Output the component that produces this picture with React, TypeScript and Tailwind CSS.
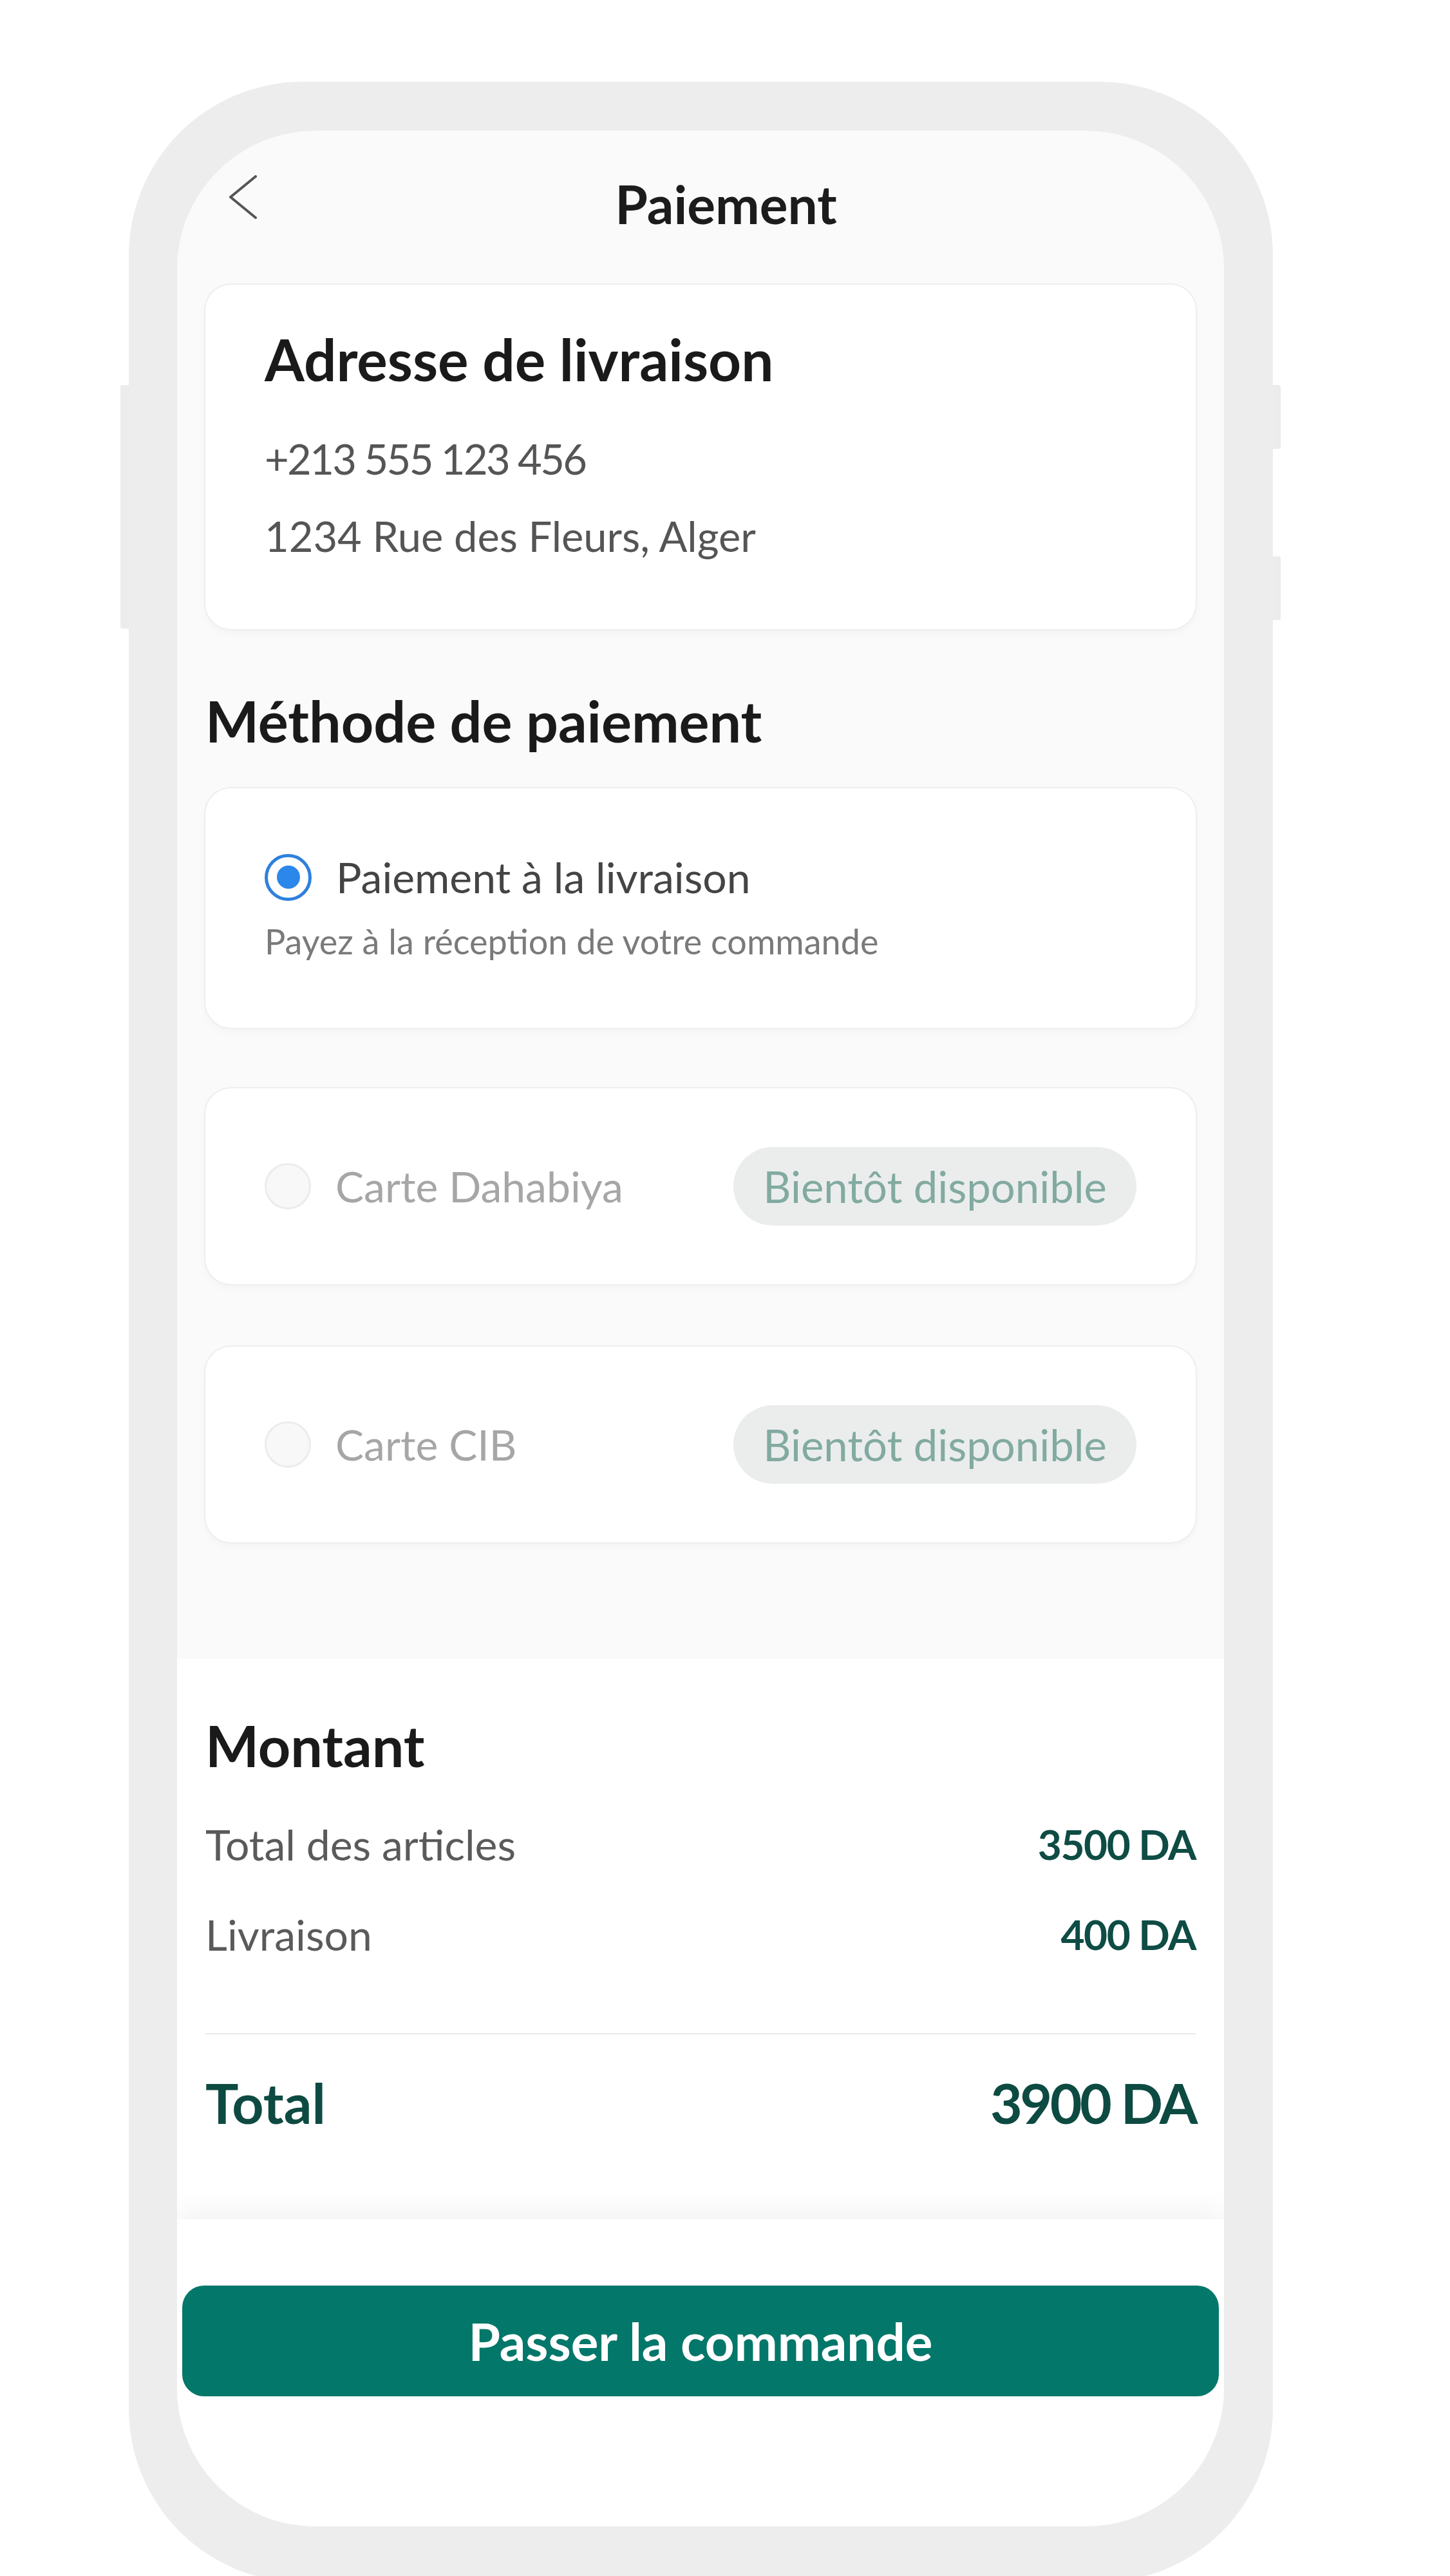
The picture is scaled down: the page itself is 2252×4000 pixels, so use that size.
import React from "react";

const Radio = ({ checked }: { checked?: boolean }) =>
  checked ? (
    <div className="flex h-[73px] w-[73px] shrink-0 items-center justify-center rounded-full border-[5px] border-[#2f80dc] bg-white">
      <div className="h-[36px] w-[36px] rounded-full bg-[#2b87ea]" />
    </div>
  ) : (
    <div className="h-[72px] w-[72px] shrink-0 rounded-full border-[3px] border-[#ececec] bg-[#f8f8f8]" />
  );

const cardCls =
  "rounded-[40px] bg-white shadow-[0_0_0_2px_#eeeeee,0_6px_14px_rgba(0,0,0,0.03)]";

const SoonOption = ({ label, className }: { label: string; className: string }) => (
  <div className={`${cardCls} ${className} flex items-center justify-between px-[92px] py-[91px]`}>
    <div className="flex items-center gap-[38px]">
      <Radio />
      <span className="text-[66px] leading-[90px] text-[#a6a6a6]">{label}</span>
    </div>
    <span className="flex h-[122px] items-center rounded-full bg-[#ebeded] px-[46px] text-[67px] leading-none text-[#82aaa1]">
      Bientôt disponible
    </span>
  </div>
);

const AmountRow = ({ label, value, className }: { label: string; value: string; className?: string }) => (
  <div className={`flex items-center justify-between leading-[96px] ${className ?? ""}`}>
    <span className="text-[66px] text-[#5a5a5a]">{label}</span>
    <span className="text-[64px] font-bold tracking-[-1.5px] text-[#0e4c44]">{value}</span>
  </div>
);

export default function App() {
  return (
    <div className="min-h-screen bg-white pl-[200px] pt-[127px] font-['Lato',sans-serif]">
      {/* phone frame */}
      <div className="relative w-[1777px] rounded-[270px] bg-[#ededed] pb-[87px] pl-[75px] pr-[76px] pt-[76px]">
        <div className="absolute left-[-13px] top-[471px] h-[378px] w-[13px] rounded-l-[3px] bg-[#ececec]" />
        <div className="absolute right-[-12px] top-[471px] h-[99px] w-[12px] rounded-r-[3px] bg-[#ececec]" />
        <div className="absolute right-[-12px] top-[737px] h-[99px] w-[12px] rounded-r-[3px] bg-[#ececec]" />

        {/* screen */}
        <div className="flex h-[3720px] w-[1626px] flex-col overflow-hidden rounded-[215px] bg-[#fafafa]">
          {/* header */}
          <header className="flex h-[226px] shrink-0 items-center pl-[80px] pr-[45px]">
            <svg width="44" height="68" viewBox="0 0 44 68" className="mb-[20px] shrink-0">
              <polyline
                points="42,2 3,34 42,66"
                fill="none"
                stroke="#555555"
                strokeWidth="4"
                strokeLinecap="round"
                strokeLinejoin="round"
              />
            </svg>
            <h1 className="flex-1 text-center text-[82px] font-bold leading-[96px] text-[#1c1c1c]">Paiement</h1>
          </header>

          <main className="flex flex-col">
            <div className="flex flex-col px-[44px] pb-[181px] pt-[13px]">
              {/* adresse */}
              <div className={`${cardCls} px-[92px] pb-[100px] pt-[62px]`}>
                <h2 className="text-[89px] font-bold leading-[108px] text-[#1a1a1a]">Adresse de livraison</h2>
                <p className="mt-[55px] text-[65px] leading-[90px] tracking-[-2.6px] text-[#555555]">+213 555 123 456</p>
                <p className="mt-[30px] text-[65px] leading-[90px] text-[#555555]">1234 Rue des Fleurs, Alger</p>
              </div>

              <h2 className="mt-[88px] text-[88px] font-bold leading-[108px] text-[#1a1a1a]">Méthode de paiement</h2>

              <div className={`${cardCls} mt-[51px] px-[92px] pb-[94px] pt-[93px]`}>
                <div className="flex h-[90px] items-center gap-[38px]">
                  <Radio checked />
                  <span className="text-[66px] leading-[90px] text-[#444444]">Paiement à la livraison</span>
                </div>
                <p className="mt-[15px] text-[54px] leading-[80px] text-[#7a7a7a]">
                  Payez à la réception de votre commande
                </p>
              </div>

              <SoonOption label="Carte Dahabiya" className="mt-[94px]" />
              <SoonOption label="Carte CIB" className="mt-[97px]" />
            </div>

            {/* montant */}
            <section className="bg-white px-[44px] pb-[129px] pt-[80px]">
              <h2 className="text-[88px] font-bold leading-[108px] text-[#1a1a1a]">Montant</h2>
              <AmountRow label="Total des articles" value="3500 DA" className="mt-[52px]" />
              <AmountRow label="Livraison" value="400 DA" className="mt-[44px]" />
              <div className="mt-[105px] h-[2px] bg-[#e8e8e8]" />
              <div className="mt-[54px] flex items-center justify-between text-[86px] font-bold leading-[104px] text-[#0d4a42]">
                <span>Total</span>
                <span className="tracking-[-3.5px]">3900 DA</span>
              </div>
            </section>
          </main>

          {/* bouton */}
          <footer className="flex-1 bg-white px-[8px] pt-[103px] shadow-[0_-14px_40px_rgba(0,0,0,0.05)]">
            <button className="flex h-[172px] w-full items-center justify-center rounded-[34px] bg-[#03776a] text-[80px] font-bold text-white">
              Passer la commande
            </button>
          </footer>
        </div>
      </div>
    </div>
  );
}
